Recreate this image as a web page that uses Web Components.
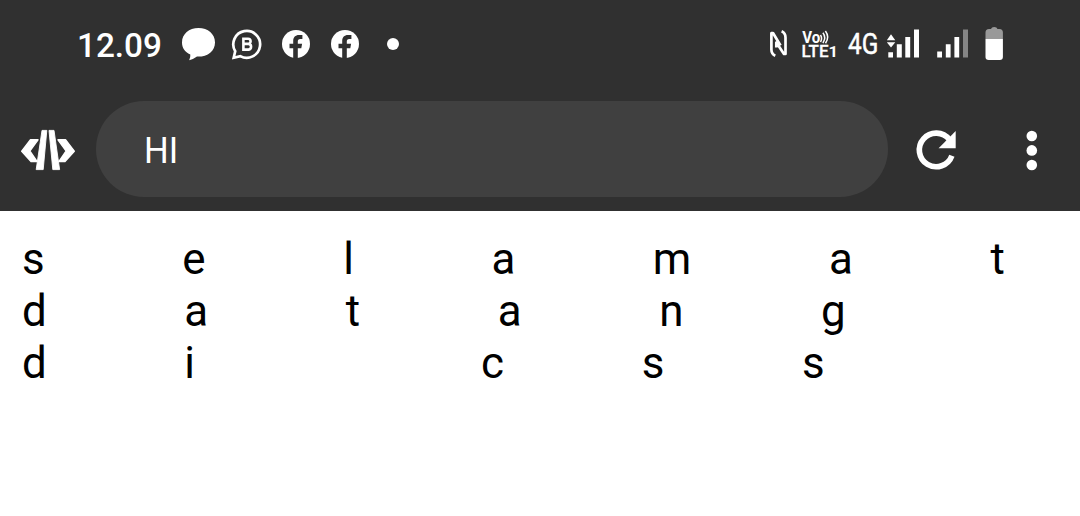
<!DOCTYPE html>
<html lang="id">
<head>
<meta charset="utf-8">
<title>HI</title>
<style>
body{margin:0;background:#fff;font-family:Roboto,"Noto Sans",sans-serif;overflow:hidden}
</style>
</head>
<body>
<phone-screen></phone-screen>
<script>
const define = (name, html) => {
  const t = document.createElement('template');
  t.innerHTML = html;
  customElements.define(name, class extends HTMLElement {
    constructor() {
      super();
      this.attachShadow({mode: 'open'}).appendChild(t.content.cloneNode(true));
    }
  });
};

define('icon-facebook', `
<style>:host{display:block;width:28px;height:28px}svg{display:block}</style>
<svg width="28" height="28" viewBox="0 0 28 28"><circle cx="14" cy="14" r="14" fill="#fff"/><path d="M11.2 28.2V18.2H7.5V13.8H11.2V11.2C11.2 7.2 13.4 5.1 17 5.1H20.4V9.1H18.3C16.3 9.1 15.8 10 15.8 11.5V13.8H20.1L19.3 18.2H15.8V28.2Z" fill="#303030"/></svg>`);

define('status-bar', `
<style>
:host{display:flex;justify-content:space-between;height:88px;box-sizing:border-box;padding:0 77px;color:#fff;font-weight:500}
.group{display:flex;align-items:center}
svg{display:block}
.time{font-size:33.3px;line-height:88px;width:104px;padding-top:3px;box-sizing:border-box}
.fb1{margin-left:18px}.fb2{margin-left:21px}
.wa{margin-left:15px}.dot{width:12px;height:12px;border-radius:50%;background:#fff;margin-left:28px}
.net{font-size:29px;line-height:88px;width:39px;font-weight:400;transform:scaleX(.84);transform-origin:0 50%;-webkit-text-stroke:.5px #fff}
.volte{margin:0 10px 0 13px}
.sig2{margin:0 16px 0 17px}
</style>
<div class="group">
  <span class="time">12.09</span>
  <svg width="34" height="88" viewBox="181 0 34 88"><path d="M198.5 28C189 28 182 34 182 42.4C182 47.8 184.7 51.8 190.3 54.4Q190.6 57.3 189.2 60.3Q194.3 58.8 197 56.6C207.5 57 215 51 215 42.4C215 34 208 28 198.5 28Z" fill="#fff"/></svg>
  <svg class="wa" width="34" height="88" viewBox="230 0 34 88"><path d="M233.7 57.7L235.2 51.2A13.4 13.4 0 1 1 240.3 56.1Z" fill="none" stroke="#fff" stroke-width="2.7"/><path d="M243.4 38.7H248A2.6 2.6 0 0 1 248 43.9H243.4H248.7A2.9 2.9 0 0 1 248.7 49.6H243.4Z" fill="none" stroke="#fff" stroke-width="2.6"/></svg>
  <icon-facebook class="fb1"></icon-facebook>
  <icon-facebook class="fb2"></icon-facebook>
  <span class="dot"></span>
</div>
<div class="group">
  <svg width="20" height="88" viewBox="767 0 20 88"><path d="M774.3 55.8Q770.4 54 770.4 49.5V33.2L772 33L779.5 45.5M780.6 31.3Q784.5 33 784.5 37.6V54L783 54L775.3 42.5V47.5" fill="none" stroke="#fff" stroke-width="2.7" stroke-linejoin="round"/></svg>
  <svg class="volte" width="37" height="88" viewBox="800.5 0 37 88" fill="#fff" font-family="Roboto" font-weight="700"><text x="801.8" y="43" font-size="16" textLength="18" lengthAdjust="spacingAndGlyphs">Vo</text><text x="801" y="57.2" font-size="17" textLength="27" lengthAdjust="spacingAndGlyphs" font-weight="500" stroke="#fff" stroke-width=".3">LTE</text><text x="828" y="57.2" font-size="15.5" textLength="9.5" lengthAdjust="spacingAndGlyphs">1</text><path d="M820 35Q822.2 38.4 820 42M822.4 32.8Q826 37.5 822.4 43M824.9 31Q829.4 37 825 43.3" fill="none" stroke="#fff" stroke-width="1.5"/></svg>
  <span class="net">4G</span>
  <svg width="33" height="88" viewBox="887 0 33 88"><g fill="#fff"><path d="M891 34.3L895.3 40.3H886.8ZM886.8 42.2H895.3L891 47.5ZM888.3 52.2H893V57.5H888.3ZM896.8 44.2H901.8V57.5H896.8ZM905.3 37H910.2V57.5H905.3ZM914 29.5H919V57.5H914Z"/></g></svg>
  <svg class="sig2" width="32" height="88" viewBox="937 0 32 88"><path d="M937.2 51.5H942V57.5H937.2ZM945.8 44.2H950.6V57.5H945.8ZM954.4 37H959.2V57.5H954.4Z" fill="#fff"/><path d="M963 29.5H968V57.5H963Z" fill="#858585"/></svg>
  <svg width="18" height="88" viewBox="985.5 0 18 88"><path d="M986 39V32.5Q986 29 989.5 29H991.5Q992 27 994.7 27T998 29H1000Q1003.4 29 1003.4 32.5V39Z" fill="#999"/><path d="M986 39H1003.4V56.7Q1003.4 60 1000.3 60H989.2Q986 60 986 56.7Z" fill="#fff"/></svg>
</div>`);

define('address-field', `
<style>:host{display:flex;align-items:center;box-sizing:border-box;width:792px;height:96px;border-radius:48px;background:#404040;color:#fff;padding:3px 48px 0;font-size:36.5px}
span{display:block;transform:scaleX(.95);transform-origin:0 50%}</style>
<span><slot></slot></span>`);

define('tool-bar', `
<style>
:host{display:flex;align-items:flex-start;height:123px;box-sizing:border-box;padding-top:13px}
svg{display:block}
address-field{margin:0 20px}
</style>
<svg width="76" height="96" viewBox="0 101 76 96"><path d="M30.5 139.8H38L29.8 151L37 161.5H31L21.7 151.2ZM65.5 139.8H58L66.2 151L59 161.5H65L74.3 151.2Z" fill="#fff" stroke="#fff" stroke-width="1.4" stroke-linejoin="round"/><path d="M42 130.4H46.8L43.2 169.6H36.2ZM49 130.4H54L59.6 169.6H52.8Z" fill="#fff" stroke="#fff" stroke-width=".9" stroke-linejoin="round"/></svg>
<address-field>HI</address-field>
<svg width="60" height="96" viewBox="908 101 60 96"><path d="M949.4 139.1A16.8 16.8 0 1 0 951.9 155.2" transform="translate(0 .5)" fill="none" stroke="#fff" stroke-width="5.6"/><path d="M955.7 131V148.2H938.6Z" fill="#fff"/></svg>
<svg width="112" height="96" viewBox="968 101 112 96"><g fill="#fff"><circle cx="1031.8" cy="136" r="5.3"/><circle cx="1031.8" cy="150.4" r="5.3"/><circle cx="1031.8" cy="165" r="5.3"/></g></svg>`);

define('spaced-page', `
<style>:host{display:block;padding:22px;font-size:43.9px;line-height:52px;letter-spacing:137.6px;color:#000;white-space:nowrap}
p{margin:0}p span{letter-spacing:0}</style>
<p>selama<span>t</span></p><p>datan<span>g</span></p><p>di cs<span>s</span></p>`);

define('phone-screen', `
<style>:host{display:block;height:516px;overflow:hidden}header{background:#303030;height:211px}</style>
<header><status-bar></status-bar><tool-bar></tool-bar></header>
<spaced-page></spaced-page>`);
</script>
</body>
</html>
